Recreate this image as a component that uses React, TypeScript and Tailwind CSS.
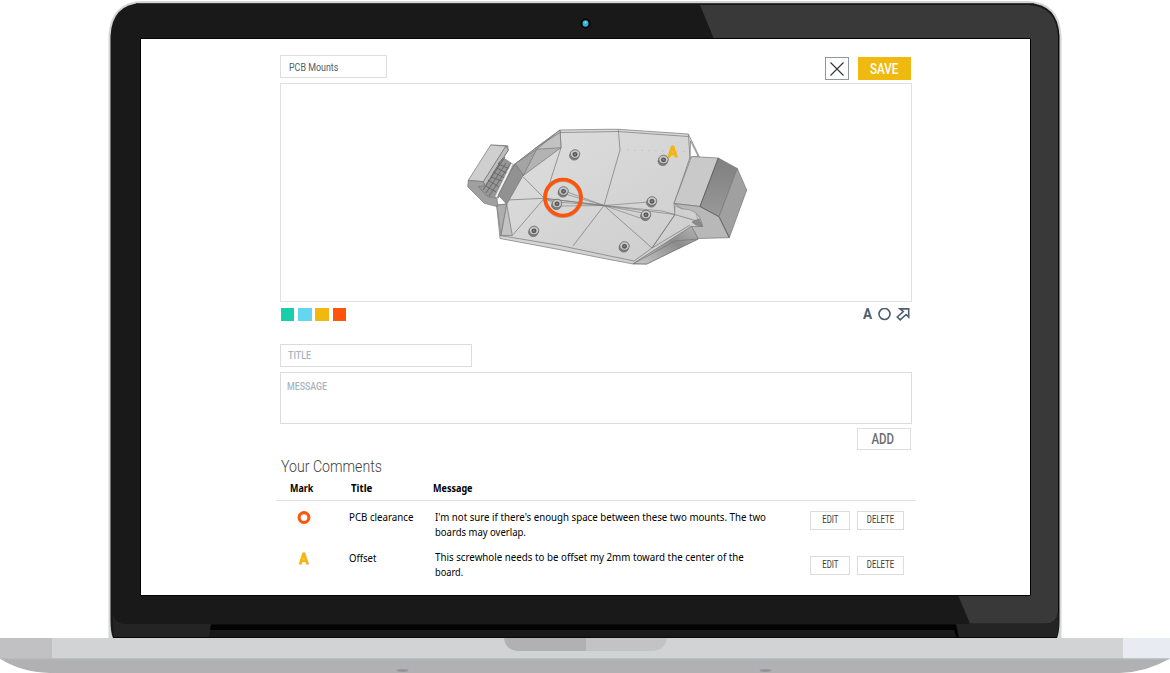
import type { ReactNode } from "react";

const mounts: [number, number][] = [
  [575, 154.5], [563.5, 191.5], [557, 204], [534, 231],
  [663.5, 160], [652, 201.5], [646, 215], [624.5, 246.5],
];

function Laptop() {
  return (
    <svg className="absolute inset-0" width="1170" height="673" viewBox="0 0 1170 673" aria-hidden="true">
      <path d="M108.500 638V36Q110 2 142 1H1028Q1060 2 1061.500 36V638Z" fill="#d3d5d6" />
      <path d="M113 638Q110.500 632 110.500 620V36Q112 4 142 3H1028Q1058 4 1059.500 36V620Q1059.500 632 1057 638Z" fill="#191919" />
      <path d="M136 3.500H1034" stroke="#3b3b3b" />
      <path d="M700 5H1028Q1056 6 1058 36V612Q1057 623 1046 623.500H970L958 595L714 39Z" fill="#393939" />
      <path d="M1058.500 30V620" stroke="#0a0a0a" />
      <path d="M112.500 612Q114 623.500 125 624H211L209 638H114Z" fill="#242424" />
      <path d="M956 624H1046Q1056 623 1058.500 612V622Q1058 634 1056 638H959Z" fill="#242424" />
      <path d="M211 624.500H956L959 638H957L954 630H210Z" fill="#030303" />
      <path d="M113 637.500H1057" stroke="#080808" />
      <circle cx="585.500" cy="23.500" r="5" fill="#030303" />
      <ellipse cx="585.500" cy="23.500" rx="3" ry="3.300" fill="#2fb1d8" />
      <circle cx="585.500" cy="22.500" r="1" fill="#8ee2f5" />
      <path d="M0 638H1170V659H0Z" fill="#d2d3d5" />
      <path d="M0 638H52V659H0Z" fill="#c1c1c3" />
      <path d="M1123 638H1170V659H1123Z" fill="#e8ecf2" />
      <path d="M0 658.500H1170Q1147 672 1120 673H50Q20 672 0 658.500Z" fill="#b1b1b3" />
      <path d="M1 659H1169" stroke="#b9babc" />
      <path d="M504 638H586V651H518Q505 650 504 638Z" fill="#b1b1b3" />
      <path d="M586 638H667Q665 650 653 651H586Z" fill="#c3c3c5" />
      <ellipse cx="402.500" cy="670.500" rx="6" ry="1.500" fill="#939398" />
      <ellipse cx="765.500" cy="670.500" rx="6" ry="1.500" fill="#939398" />
      <path d="M140.500 38.500H1030.500V595.500H140.500Z" fill="#fff" stroke="#030303" />
    </svg>
  );
}

function Model() {
  return (
    <svg className="block" width="630" height="217" viewBox="281 84 630 217" strokeLinejoin="round">
      <defs>
        <linearGradient id="floor" x1="0" y1="0" x2="1" y2="1">
          <stop offset="0" stopColor="#dedede" />
          <stop offset="1" stopColor="#cccccc" />
        </linearGradient>
        <linearGradient id="dark" x1="0" y1="0" x2="0" y2="1">
          <stop offset="0" stopColor="#7f7f7f" />
          <stop offset="1" stopColor="#999" />
        </linearGradient>
        <linearGradient id="side" x1="0" y1="1" x2="1" y2="0">
          <stop offset="0" stopColor="#c9c9c9" />
          <stop offset="0.600" stopColor="#8c8c8c" />
          <stop offset="1" stopColor="#b5b5b5" />
        </linearGradient>
      </defs>
      <g stroke="#777" strokeWidth="0.700">
        <path d="M515 164L535 148.500L560 130L605 129.300H618.300L688.300 134L699.500 157L724 190L698 239L646.700 264L633.300 264L605 258.700L560 249.700L500 238.500L496.700 205L506 204Z" fill="url(#floor)" />
        <path d="M690.500 141L698 156L690 158Z" fill="#fff" />
        <path d="M560 130L561 147.700L523.300 175.500L515 164L535 148.500Z" fill="#b3b3b3" />
        <path d="M560 130L561 147.700L536.700 149.300Z" fill="#c2c2c2" />
        <path d="M536.700 149.300L523.300 175.500L515 164Z" fill="#a4a4a4" />
        <path d="M496.700 205L506.700 204.300L501 235.500Z" fill="#adadad" />
        <path d="M506.700 204.300L512.300 235.500H501Z" fill="#c3c3c3" />
        <path d="M633.300 263.500L691.700 226L698.300 239L646.700 264Z" fill="url(#side)" />
        <path d="M500 235.500L560 245.500L605 255L634 261L652 248L675 214.500M535 148.500L560 132.500L618 131.500L688 136.500M675 214.500L700 222M561 147.700L550 182L544.300 198.300L523.300 177M507 200L544.300 198.300L512.300 235.500M604 205.500L544.300 198.300M604 205.500L573 246M604 205.500L620 150L618.300 129.300M604 205.500L652 248M652 248L690 225M633 264L675 241L698 239M688.300 134L690 157L684 175L674 203.500L675 214.500L652 248" fill="none" />
        <path d="M544.300 198.300L604 205.500L566 191.500M544.300 198.300L560 206L604 205.500M544.300 198.300L556 202L604 205.500M604 205.500L649 202M604 205.500L643 213M604 205.500L640 218M604 205.500L675 214.500M604 205.500L662 211L675 214.500M562 193L604 205.500" fill="none" strokeWidth="0.600" />
        <path d="M620 150L686 151.500" stroke="#c0c0c0" strokeDasharray="2 5" />
        <path d="M490.700 145L507.700 145.700L508.300 150L503.500 158L511 163L515 166L498.300 198L486.700 196L477.700 186L483.300 181.700Z" fill="#969696" />
        <path d="M490.700 145L506 146L483.300 181.700L468.300 180.300Z" fill="#cfcfcf" />
        <path d="M506 146L508.300 150L485 186L483.300 181.700Z" fill="#bdbdbd" />
        <path d="M468.300 180.300L467.700 186.700L484.300 203.300L497.700 206.700L497 198.500L487 196.500L478 186.500L485 186L483.300 181.700Z" fill="#a0a0a0" />
        <path d="M503 158L498 164L510 169M500 162L491 177L502 181M497 168L508 174M493 172L505 178M488 180L499 187M486 186L496 192M505 157L483 190M511 163L489 196M506 163L486 193" fill="none" stroke="#666" strokeWidth="0.900" />
        <path d="M512 164L496 197" stroke="#ededed" strokeWidth="2" />
        <path d="M515 163.500L523.300 175L506.700 204.300L498.300 195Z" fill="#919191" />
        <path d="M674 203.500L691.500 156.500L718.300 158L700 206.500Z" fill="#c9c9c9" />
        <path d="M718.300 158L737.300 168.500L719 216.700L700 206.500Z" fill="url(#dark)" />
        <path d="M737.300 168.500L746.700 190L729.300 237.700L719 216.700Z" fill="#a0a0a0" />
        <path d="M674 203.500L700 206.500L719 216.700L729.300 237.700L698.300 238.500L691.500 226.500L702.500 226.500Q701 216 694 212Q688 209 682 209Z" fill="#b8b8b8" />
        <path d="M675 206L682 209Q690 208.500 696 213L698 221L675 214.500Z" fill="#d0d0d0" strokeWidth="0.400" />
        <path d="M692 222L699 219L702.500 226.500L696 225Z" fill="#8b8b8b" />
        <path d="M718.300 158L700 206.500L719 216.700L729.300 237.700" fill="none" stroke="#5c5c5c" />
      </g>
      {mounts.map(([x, y]) => (
        <g key={`${x}-${y}`} stroke="#636363">
          <ellipse cx={x - 0.7} cy={y + 1.3} rx="4.700" ry="4.300" fill="#808080" strokeWidth="0.700" />
          <ellipse cx={x} cy={y - 0.5} rx="4.800" ry="4.300" fill="#c6c6c6" strokeWidth="0.800" />
          <ellipse cx={x} cy={y - 0.2} rx="1.800" ry="1.700" fill="#888" strokeWidth="1.400" stroke="#555" />
        </g>
      ))}
      <circle cx="563" cy="198" r="18" fill="none" stroke="#8a5a45" strokeOpacity="0.400" strokeWidth="4" />
      <circle cx="563" cy="197.500" r="18" fill="none" stroke="#ff5409" strokeWidth="3.600" />
      <text x="673" y="156.700" textAnchor="middle" className="font-['Roboto',sans-serif] text-[14px] font-bold" fill="#f5b50d" stroke="#f5b50d" strokeWidth="1">
        A
      </text>
    </svg>
  );
}

/* Narrowed run of text; the scale class sets how condensed it is. */
function Narrow({ className, children }: { className: string; children: ReactNode }) {
  return <span className={`block w-max whitespace-nowrap ${className}`}>{children}</span>;
}

function RowButton({ className, children }: { className: string; children: ReactNode }) {
  return (
    <button className={`flex h-[19px] justify-center border border-[#dcdcdc] font-['Roboto',sans-serif] text-[10px] leading-[15px] text-[#3a3a3a] ${className}`}>
      <Narrow className="scale-x-[0.78]">{children}</Narrow>
    </button>
  );
}

export default function App() {
  return (
    <div className="relative h-[673px] w-[1170px] overflow-hidden bg-white">
      <Laptop />
      <main className="relative ml-[280px] w-[632px] pt-[55px] font-['Roboto',sans-serif]">
        <header className="flex h-7 items-start">
          <div className="h-[23px] w-[107px] border border-[#dedede] pl-2 pt-px text-[11px] leading-[22px] text-[#50616b]">
            <Narrow className="origin-left scale-x-[0.81]">PCB Mounts</Narrow>
          </div>
          <button className="ml-auto mt-[2px] h-[23px] w-6 border border-[#8d979e]" aria-label="Close">
            <svg className="block" width="22" height="21" viewBox="0 0 22 21" fill="none" stroke="#333" strokeWidth="1.100">
              <path d="M4.500 4.500L17.500 17.500M17.500 4.500L4.500 17.500" />
            </svg>
          </button>
          <button className="ml-[9px] mr-px mt-[2px] flex h-[23px] w-[53px] justify-center bg-[#f0b90f] text-[14px] font-medium leading-[25px] text-white">
            <Narrow className="scale-x-[0.83]">SAVE</Narrow>
          </button>
        </header>

        <section className="border border-[#e0e0e0]">
          <Model />
        </section>

        <div className="flex h-[42px] items-start pt-[6px]">
          <div className="flex gap-[3.800px] pl-px">
            <i className="size-[13.400px] bg-[#18cfa9]" />
            <i className="size-[13.400px] bg-[#63d7ee]" />
            <i className="size-[13.400px] bg-[#f0b90f]" />
            <i className="size-[13.400px] bg-[#ff5409]" />
          </div>
          <div className="ml-auto flex pr-[2px] text-[#4d606c]">
            <Narrow className="origin-right scale-x-[0.9] text-[15px] font-bold leading-[13px]">A</Narrow>
            <svg className="ml-[6px] block" width="13" height="13" viewBox="878.500 308 13 13" fill="none" stroke="currentColor" strokeWidth="1.600">
              <circle cx="885" cy="314" r="5.500" />
            </svg>
            <svg className="ml-[5px] block" width="14" height="13" viewBox="896.500 308 14 13" fill="none" stroke="currentColor" strokeWidth="1.600">
              <path d="M900.500 308.900H909.200V317L906.600 314.500L900.700 319.900L897.800 317L903.800 311.600Z" />
            </svg>
          </div>
        </div>

        <div className="h-[23px] w-[192px] border border-[#dcdcdc] pl-[7px] text-[11px] font-medium leading-[21px] text-[#a9b5bc]">
          <Narrow className="origin-left scale-x-[0.81]">TITLE</Narrow>
        </div>
        <div className="mt-[5px] h-[52px] border border-[#dcdcdc] pl-[6px] pt-[3px] text-[11px] font-medium leading-[21px] text-[#a9b5bc]">
          <Narrow className="origin-left scale-x-[0.8]">MESSAGE</Narrow>
        </div>
        <button className="ml-auto mr-px mt-1 flex h-[22px] w-[54px] justify-center border border-[#dedede] pr-[2px] text-[14px] font-medium leading-[21px] text-[#6c6c6c]">
          <Narrow className="scale-x-[0.82]">ADD</Narrow>
        </button>

        <h2 className="mt-[6px] h-6 pl-px text-[16.500px] font-light leading-[22px] text-[#3f3f3f]">
          <Narrow className="origin-left scale-x-[0.857]">Your Comments</Narrow>
        </h2>

        <section className="-ml-1 w-[640px] font-['Noto_Sans',sans-serif] text-[10.500px] leading-[15px] text-black">
          <div className="flex h-[21px] border-b border-[#e2e2e2] pl-[14px] pt-px font-bold">
            <div className="w-[61px]"><Narrow className="origin-left scale-x-[0.85]">Mark</Narrow></div>
            <div className="w-[82px]"><Narrow className="origin-left scale-x-[0.92]">Title</Narrow></div>
            <div><Narrow className="origin-left scale-x-[0.86]">Message</Narrow></div>
          </div>

          <div className="flex h-10 items-start pt-[9px]">
            <svg className="ml-[21px] mt-px block" width="14" height="14" viewBox="0 0 14 14" fill="none" stroke="#ff5409" strokeWidth="3.100">
              <circle cx="7" cy="6.500" r="4.900" />
            </svg>
            <div className="ml-[37.500px] w-[86px]"><Narrow className="origin-left scale-x-[0.926]">PCB clearance</Narrow></div>
            <div className="w-[375.500px]">
              <Narrow className="origin-left scale-x-[0.924]">I'm not sure if there's enough space between these two mounts. The two</Narrow>
              <Narrow className="origin-left scale-x-[0.905]">boards may overlap.</Narrow>
            </div>
            <div className="flex gap-[7px] pt-px">
              <RowButton className="w-10">EDIT</RowButton>
              <RowButton className="w-[47px]">DELETE</RowButton>
            </div>
          </div>

          <div className="flex items-start pt-[9px]">
            <div className="ml-[21px] mt-[2px] flex w-[14px] justify-center font-['Roboto',sans-serif] text-[14px] font-bold text-[#f5b50d] [-webkit-text-stroke:0.800px_#f5b50d]">A</div>
            <div className="ml-[37.500px] w-[86px] pt-px"><Narrow className="origin-left scale-x-[0.91]">Offset</Narrow></div>
            <div className="w-[375.500px]">
              <Narrow className="origin-left scale-x-[0.929]">This screwhole needs to be offset my 2mm toward the center of the</Narrow>
              <Narrow className="origin-left scale-x-[0.88]">board.</Narrow>
            </div>
            <div className="flex gap-[7px] pt-[6px]">
              <RowButton className="w-10">EDIT</RowButton>
              <RowButton className="w-[47px]">DELETE</RowButton>
            </div>
          </div>
        </section>
      </main>
    </div>
  );
}
